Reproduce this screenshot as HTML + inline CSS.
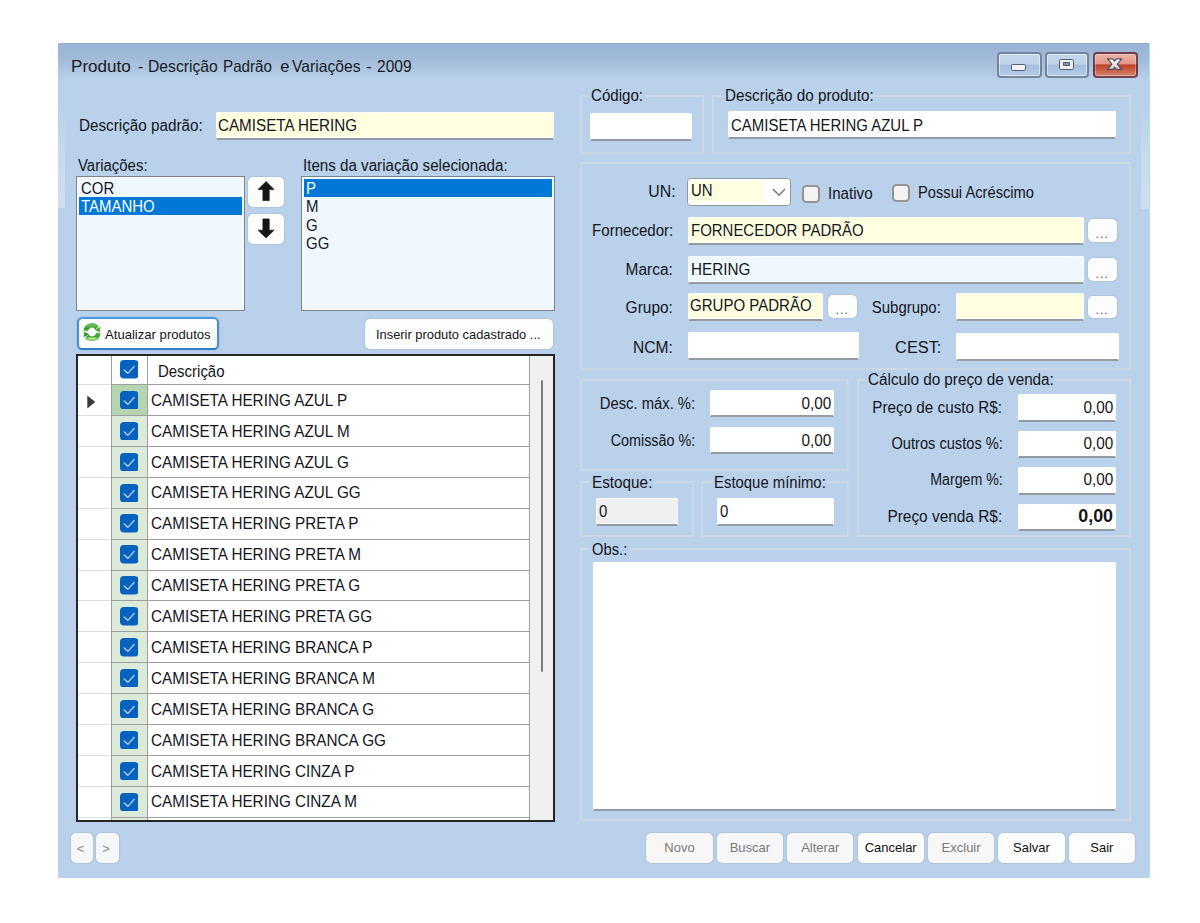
<!DOCTYPE html>
<html lang="pt-BR">
<head>
<meta charset="utf-8">
<title>Produto - Descrição Padrão e Variações - 2009</title>
<style>
*{box-sizing:border-box;margin:0;padding:0}
html,body{width:1200px;height:923px;background:#fff;overflow:hidden}
body{font-family:"Liberation Sans",sans-serif;font-size:16px;color:#15151c;position:relative}
#win{position:absolute;left:58px;top:43px;width:1092px;height:835px;background:#b9d1ea}
#cap{position:absolute;left:0;top:0;width:100%;height:40px;background:linear-gradient(#93afd0 0,#9ab5d5 2px,#a0bad8 15px,#a7c1de 22px,#afc9e4 29px,#b9d1ea 37px)}
.abs,.t,.tr,.in,.gb,.btn,.lb,.cb{position:absolute}
/* text: condensed to mimic MS Sans Serif */
.t{white-space:pre;line-height:20px;height:20px;transform:scaleX(.935);transform-origin:0 50%}
.tr{white-space:pre;line-height:20px;height:20px;transform:scaleX(.935);transform-origin:100% 50%;text-align:right}
.in{background:#fff;border:1px solid rgba(255,255,255,.8);border-bottom:2px solid #949aa1;box-shadow:inset 0 -1px 0 rgba(255,255,255,.85);border-radius:1.5px}
.y{background:#ffffe1}
.b{background:#f0f8ff}
.g{background:#f0f0f0}
.gb{border:2px solid #ccd7e3}
.gl{position:absolute;background:#b9d1ea;height:2px;top:-2px}
.btn{background:#fdfdfd;border-radius:5px;box-shadow:0 0 1.5px rgba(110,115,125,.55)}
.lb{background:#f0f8ff;border:1px solid #7e8288;box-shadow:inset 0 0 0 1px #fbfdff}
.sel{position:absolute;background:#0078d7}
.cb{width:18px;height:18px;background:#f3f3f3;border:2px solid #949494;border-radius:4.5px}

.bb{font-size:13px;line-height:30px;text-align:center}
.cbtn{border:2px solid rgba(98,112,138,.78);border-radius:4px;background:linear-gradient(#c5d7ed 0,#bed2ea 46%,#a5bedd 50%,#b4cce8 100%);box-shadow:inset 0 0 0 1px rgba(255,255,255,.5)}
.cbtn.x{border-color:rgba(92,52,72,.85);background:linear-gradient(#efb2a6 0,#e29886 44%,#bd4429 50%,#c9583f 70%,#d98672 100%);box-shadow:inset 0 0 0 1px rgba(255,255,255,.3)}
</style>
</head>
<body>
<div id="win">
<div id="cap"></div>
<div class="abs" style="left:0;top:64px;width:6.5px;height:101px;background:linear-gradient(rgba(255,255,255,0),rgba(255,255,255,.2) 45%,rgba(255,255,255,.3))"></div>
<div class="abs" style="right:1px;top:64px;width:8px;height:102px;background:linear-gradient(rgba(255,255,255,0),rgba(255,255,255,.2) 45%,rgba(255,255,255,.3))"></div>
<div class="abs" style="right:0;top:0;width:1.5px;height:100%;background:#a9e2f6"></div>
</div>
<div class="t" style="left:78.55px;top:115.85px;transform:scaleX(0.953);">Descrição padrão:</div>
<div class="in y" style="left:216px;top:112px;width:338px;height:28px;"></div>
<div class="t" style="left:218.05px;top:116.05px;transform:scaleX(0.95);">CAMISETA HERING</div>
<div class="t" style="left:78.30px;top:156.05px;">Variações:</div>
<div class="t" style="left:303.05px;top:156.05px;transform:scaleX(0.947);">Itens da variação selecionada:</div>
<div class="lb" style="left:76px;top:176px;width:169px;height:135px;"></div>
<div class="sel" style="left:78.5px;top:197px;width:163.25px;height:18px;"></div>
<div class="t" style="left:80.60px;top:179.05px;">COR</div>
<div class="t" style="left:80.60px;top:197.35px;color:#fff;">TAMANHO</div>
<div class="btn" style="left:248px;top:177px;width:36.39999999999998px;height:30.30000000000001px;"><svg width="36" height="30" viewBox="0 0 36 30"><path d="M18.1 4.6 L26 12.4 H21.2 V23.6 H14.9 V12.4 H10.1 Z" fill="#161616" stroke="#161616" stroke-width=".7" stroke-linejoin="round"/></svg></div>
<div class="btn" style="left:248px;top:213.5px;width:36.39999999999998px;height:30.69999999999999px;"><svg width="36" height="30" viewBox="0 0 36 30"><path d="M18.1 23.9 L26 16.2 H21.2 V4.9 H14.9 V16.2 H10.1 Z" fill="#161616" stroke="#161616" stroke-width=".7" stroke-linejoin="round"/></svg></div>
<div class="lb" style="left:301px;top:176px;width:254px;height:135px;"></div>
<div class="sel" style="left:303.75px;top:178.75px;width:248.25px;height:18.25px;"></div>
<div class="t" style="left:306.30px;top:179.05px;color:#fff;">P</div>
<div class="t" style="left:306.30px;top:197.35px;">M</div>
<div class="t" style="left:305.90px;top:215.55px;">G</div>
<div class="t" style="left:305.90px;top:233.75px;">GG</div>
<div class="btn" style="left:77.2px;top:317.4px;width:141.60000000000002px;height:33.0px;border:2px solid #3f8fdc;border-color:#4b99de #3f8fdc #2f80cc #3f8fdc;background:#fdfdfd;border-radius:5.5px;"></div>
<svg class="abs" style="left:82px;top:322.4px" width="20" height="21" viewBox="0 0 20 21"><defs><linearGradient id="rg" x1="0" y1="0" x2="0" y2="1"><stop offset="0" stop-color="#63bb55"/><stop offset=".5" stop-color="#3fa233"/><stop offset=".55" stop-color="#2c9622"/><stop offset="1" stop-color="#7fd05e"/></linearGradient></defs><ellipse cx="10" cy="17.2" rx="7.6" ry="1.6" fill="#555" opacity=".35"/><path d="M3.7 9.2 A6.3 6.3 0 0 1 15 5.8" fill="none" stroke="url(#rg)" stroke-width="4.5"/><path d="M12.6 7.8 L18.4 4.8 L17.7 10.2 Z" fill="#4aa83e"/><path d="M16.3 10.8 A6.3 6.3 0 0 1 5 14.2" fill="none" stroke="url(#rg)" stroke-width="4.5"/><path d="M7.4 12.2 L1.6 15.2 L2.3 9.8 Z" fill="#2f9a25"/><path d="M6.5 15.6 A6.6 6.6 0 0 0 13.5 15.6" fill="none" stroke="#c4ee8e" stroke-width="1.3" opacity=".9"/></svg>
<div class="t" style="left:105.30px;top:324.80px;font-size:13px;transform:scaleX(1.008);">Atualizar produtos</div>
<div class="btn" style="left:365px;top:318.7px;width:187.5px;height:30.0px;"></div>
<div class="t" style="left:375.80px;top:324.80px;font-size:13px;transform:scaleX(.99);">Inserir produto cadastrado ...</div>
<div id="grid" class="abs" style="left:76px;top:354px;width:479px;height:468px;background:#fff;overflow:hidden"><div class="abs" style="left:453.7px;top:0;width:25.3px;height:100%;background:#f0f0f0"></div><div class="abs" style="left:464.8px;top:25.8px;width:2.6px;height:292.6px;background:#7c7c7c;border-radius:1px"></div><div class="abs" style="left:36px;top:30.60px;width:35px;height:30.9px;background:#b4d5b0"></div><div class="abs" style="left:36px;top:61.50px;width:35px;height:30.9px;background:#dcebd9"></div><div class="abs" style="left:36px;top:92.40px;width:35px;height:30.9px;background:#dcebd9"></div><div class="abs" style="left:36px;top:123.30px;width:35px;height:30.9px;background:#dcebd9"></div><div class="abs" style="left:36px;top:154.20px;width:35px;height:30.9px;background:#dcebd9"></div><div class="abs" style="left:36px;top:185.10px;width:35px;height:30.9px;background:#dcebd9"></div><div class="abs" style="left:36px;top:216.00px;width:35px;height:30.9px;background:#dcebd9"></div><div class="abs" style="left:36px;top:246.90px;width:35px;height:30.9px;background:#dcebd9"></div><div class="abs" style="left:36px;top:277.80px;width:35px;height:30.9px;background:#dcebd9"></div><div class="abs" style="left:36px;top:308.70px;width:35px;height:30.9px;background:#dcebd9"></div><div class="abs" style="left:36px;top:339.60px;width:35px;height:30.9px;background:#dcebd9"></div><div class="abs" style="left:36px;top:370.50px;width:35px;height:30.9px;background:#dcebd9"></div><div class="abs" style="left:36px;top:401.40px;width:35px;height:30.9px;background:#dcebd9"></div><div class="abs" style="left:36px;top:432.30px;width:35px;height:30.9px;background:#dcebd9"></div><div class="abs" style="left:36px;top:463.20px;width:35px;height:30.9px;background:#dcebd9"></div><div class="abs" style="left:35px;top:0;width:1px;height:100%;background:#9e9e9e"></div><div class="abs" style="left:71px;top:0;width:1px;height:100%;background:#9e9e9e"></div><div class="abs" style="left:453px;top:0;width:1px;height:100%;background:#9e9e9e"></div><div class="abs" style="left:0;top:30px;width:36px;height:1px;background:#dedede"></div><div class="abs" style="left:35px;top:30px;width:419px;height:1px;background:#9e9e9e"></div><div class="abs" style="left:0;top:61px;width:36px;height:1px;background:#dedede"></div><div class="abs" style="left:35px;top:61px;width:419px;height:1px;background:#9e9e9e"></div><div class="abs" style="left:0;top:92px;width:36px;height:1px;background:#dedede"></div><div class="abs" style="left:35px;top:92px;width:419px;height:1px;background:#9e9e9e"></div><div class="abs" style="left:0;top:123px;width:36px;height:1px;background:#dedede"></div><div class="abs" style="left:35px;top:123px;width:419px;height:1px;background:#9e9e9e"></div><div class="abs" style="left:0;top:154px;width:36px;height:1px;background:#dedede"></div><div class="abs" style="left:35px;top:154px;width:419px;height:1px;background:#9e9e9e"></div><div class="abs" style="left:0;top:185px;width:36px;height:1px;background:#dedede"></div><div class="abs" style="left:35px;top:185px;width:419px;height:1px;background:#9e9e9e"></div><div class="abs" style="left:0;top:216px;width:36px;height:1px;background:#dedede"></div><div class="abs" style="left:35px;top:216px;width:419px;height:1px;background:#9e9e9e"></div><div class="abs" style="left:0;top:246px;width:36px;height:1px;background:#dedede"></div><div class="abs" style="left:35px;top:246px;width:419px;height:1px;background:#9e9e9e"></div><div class="abs" style="left:0;top:277px;width:36px;height:1px;background:#dedede"></div><div class="abs" style="left:35px;top:277px;width:419px;height:1px;background:#9e9e9e"></div><div class="abs" style="left:0;top:308px;width:36px;height:1px;background:#dedede"></div><div class="abs" style="left:35px;top:308px;width:419px;height:1px;background:#9e9e9e"></div><div class="abs" style="left:0;top:339px;width:36px;height:1px;background:#dedede"></div><div class="abs" style="left:35px;top:339px;width:419px;height:1px;background:#9e9e9e"></div><div class="abs" style="left:0;top:370px;width:36px;height:1px;background:#dedede"></div><div class="abs" style="left:35px;top:370px;width:419px;height:1px;background:#9e9e9e"></div><div class="abs" style="left:0;top:401px;width:36px;height:1px;background:#dedede"></div><div class="abs" style="left:35px;top:401px;width:419px;height:1px;background:#9e9e9e"></div><div class="abs" style="left:0;top:432px;width:36px;height:1px;background:#dedede"></div><div class="abs" style="left:35px;top:432px;width:419px;height:1px;background:#9e9e9e"></div><div class="abs" style="left:0;top:463px;width:36px;height:1px;background:#dedede"></div><div class="abs" style="left:35px;top:463px;width:419px;height:1px;background:#9e9e9e"></div><div class="abs" style="left:0;top:494px;width:36px;height:1px;background:#dedede"></div><div class="abs" style="left:35px;top:494px;width:419px;height:1px;background:#9e9e9e"></div><svg class="abs" style="left:43.5px;top:6.2px" width="18.5" height="18.5" viewBox="0 0 18 18"><rect width="18" height="18" rx="3.8" fill="#0561be"/><path d="M4.1 9.8 L7.7 13 L13.7 6.4" fill="none" stroke="#fff" stroke-opacity=".68" stroke-width="1.4" stroke-linecap="round" stroke-linejoin="round"/></svg><div class="t" style="left:81.5px;top:7.95px">Descrição</div><svg class="abs" style="left:43.5px;top:36.80px" width="18.5" height="18.5" viewBox="0 0 18 18"><rect width="18" height="18" rx="3.8" fill="#0561be"/><path d="M4.1 9.8 L7.7 13 L13.7 6.4" fill="none" stroke="#fff" stroke-opacity=".68" stroke-width="1.4" stroke-linecap="round" stroke-linejoin="round"/></svg><div class="t" style="left:75.2px;top:36.75px;transform:scaleX(.955)">CAMISETA HERING AZUL P</div><svg class="abs" style="left:43.5px;top:67.70px" width="18.5" height="18.5" viewBox="0 0 18 18"><rect width="18" height="18" rx="3.8" fill="#0561be"/><path d="M4.1 9.8 L7.7 13 L13.7 6.4" fill="none" stroke="#fff" stroke-opacity=".68" stroke-width="1.4" stroke-linecap="round" stroke-linejoin="round"/></svg><div class="t" style="left:75.2px;top:67.65px;transform:scaleX(.955)">CAMISETA HERING AZUL M</div><svg class="abs" style="left:43.5px;top:98.60px" width="18.5" height="18.5" viewBox="0 0 18 18"><rect width="18" height="18" rx="3.8" fill="#0561be"/><path d="M4.1 9.8 L7.7 13 L13.7 6.4" fill="none" stroke="#fff" stroke-opacity=".68" stroke-width="1.4" stroke-linecap="round" stroke-linejoin="round"/></svg><div class="t" style="left:75.2px;top:98.55px;transform:scaleX(.955)">CAMISETA HERING AZUL G</div><svg class="abs" style="left:43.5px;top:129.50px" width="18.5" height="18.5" viewBox="0 0 18 18"><rect width="18" height="18" rx="3.8" fill="#0561be"/><path d="M4.1 9.8 L7.7 13 L13.7 6.4" fill="none" stroke="#fff" stroke-opacity=".68" stroke-width="1.4" stroke-linecap="round" stroke-linejoin="round"/></svg><div class="t" style="left:75.2px;top:129.45px;transform:scaleX(.955)">CAMISETA HERING AZUL GG</div><svg class="abs" style="left:43.5px;top:160.40px" width="18.5" height="18.5" viewBox="0 0 18 18"><rect width="18" height="18" rx="3.8" fill="#0561be"/><path d="M4.1 9.8 L7.7 13 L13.7 6.4" fill="none" stroke="#fff" stroke-opacity=".68" stroke-width="1.4" stroke-linecap="round" stroke-linejoin="round"/></svg><div class="t" style="left:75.2px;top:160.35px;transform:scaleX(.955)">CAMISETA HERING PRETA P</div><svg class="abs" style="left:43.5px;top:191.30px" width="18.5" height="18.5" viewBox="0 0 18 18"><rect width="18" height="18" rx="3.8" fill="#0561be"/><path d="M4.1 9.8 L7.7 13 L13.7 6.4" fill="none" stroke="#fff" stroke-opacity=".68" stroke-width="1.4" stroke-linecap="round" stroke-linejoin="round"/></svg><div class="t" style="left:75.2px;top:191.25px;transform:scaleX(.955)">CAMISETA HERING PRETA M</div><svg class="abs" style="left:43.5px;top:222.20px" width="18.5" height="18.5" viewBox="0 0 18 18"><rect width="18" height="18" rx="3.8" fill="#0561be"/><path d="M4.1 9.8 L7.7 13 L13.7 6.4" fill="none" stroke="#fff" stroke-opacity=".68" stroke-width="1.4" stroke-linecap="round" stroke-linejoin="round"/></svg><div class="t" style="left:75.2px;top:222.15px;transform:scaleX(.955)">CAMISETA HERING PRETA G</div><svg class="abs" style="left:43.5px;top:253.10px" width="18.5" height="18.5" viewBox="0 0 18 18"><rect width="18" height="18" rx="3.8" fill="#0561be"/><path d="M4.1 9.8 L7.7 13 L13.7 6.4" fill="none" stroke="#fff" stroke-opacity=".68" stroke-width="1.4" stroke-linecap="round" stroke-linejoin="round"/></svg><div class="t" style="left:75.2px;top:253.05px;transform:scaleX(.955)">CAMISETA HERING PRETA GG</div><svg class="abs" style="left:43.5px;top:284.00px" width="18.5" height="18.5" viewBox="0 0 18 18"><rect width="18" height="18" rx="3.8" fill="#0561be"/><path d="M4.1 9.8 L7.7 13 L13.7 6.4" fill="none" stroke="#fff" stroke-opacity=".68" stroke-width="1.4" stroke-linecap="round" stroke-linejoin="round"/></svg><div class="t" style="left:75.2px;top:283.95px;transform:scaleX(.955)">CAMISETA HERING BRANCA P</div><svg class="abs" style="left:43.5px;top:314.90px" width="18.5" height="18.5" viewBox="0 0 18 18"><rect width="18" height="18" rx="3.8" fill="#0561be"/><path d="M4.1 9.8 L7.7 13 L13.7 6.4" fill="none" stroke="#fff" stroke-opacity=".68" stroke-width="1.4" stroke-linecap="round" stroke-linejoin="round"/></svg><div class="t" style="left:75.2px;top:314.85px;transform:scaleX(.955)">CAMISETA HERING BRANCA M</div><svg class="abs" style="left:43.5px;top:345.80px" width="18.5" height="18.5" viewBox="0 0 18 18"><rect width="18" height="18" rx="3.8" fill="#0561be"/><path d="M4.1 9.8 L7.7 13 L13.7 6.4" fill="none" stroke="#fff" stroke-opacity=".68" stroke-width="1.4" stroke-linecap="round" stroke-linejoin="round"/></svg><div class="t" style="left:75.2px;top:345.75px;transform:scaleX(.955)">CAMISETA HERING BRANCA G</div><svg class="abs" style="left:43.5px;top:376.70px" width="18.5" height="18.5" viewBox="0 0 18 18"><rect width="18" height="18" rx="3.8" fill="#0561be"/><path d="M4.1 9.8 L7.7 13 L13.7 6.4" fill="none" stroke="#fff" stroke-opacity=".68" stroke-width="1.4" stroke-linecap="round" stroke-linejoin="round"/></svg><div class="t" style="left:75.2px;top:376.65px;transform:scaleX(.955)">CAMISETA HERING BRANCA GG</div><svg class="abs" style="left:43.5px;top:407.60px" width="18.5" height="18.5" viewBox="0 0 18 18"><rect width="18" height="18" rx="3.8" fill="#0561be"/><path d="M4.1 9.8 L7.7 13 L13.7 6.4" fill="none" stroke="#fff" stroke-opacity=".68" stroke-width="1.4" stroke-linecap="round" stroke-linejoin="round"/></svg><div class="t" style="left:75.2px;top:407.55px;transform:scaleX(.955)">CAMISETA HERING CINZA P</div><svg class="abs" style="left:43.5px;top:438.50px" width="18.5" height="18.5" viewBox="0 0 18 18"><rect width="18" height="18" rx="3.8" fill="#0561be"/><path d="M4.1 9.8 L7.7 13 L13.7 6.4" fill="none" stroke="#fff" stroke-opacity=".68" stroke-width="1.4" stroke-linecap="round" stroke-linejoin="round"/></svg><div class="t" style="left:75.2px;top:438.45px;transform:scaleX(.955)">CAMISETA HERING CINZA M</div><svg class="abs" style="left:43.5px;top:469.40px" width="18.5" height="18.5" viewBox="0 0 18 18"><rect width="18" height="18" rx="3.8" fill="#0561be"/><path d="M4.1 9.8 L7.7 13 L13.7 6.4" fill="none" stroke="#fff" stroke-opacity=".68" stroke-width="1.4" stroke-linecap="round" stroke-linejoin="round"/></svg><div class="t" style="left:75.2px;top:469.35px;transform:scaleX(.955)">CAMISETA HERING CINZA G</div><svg class="abs" style="left:10.8px;top:41.2px" width="9" height="14" viewBox="0 0 9 14"><path d="M0.3 0.4 L8.2 7 L0.3 13.6 Z" fill="#3a3a3a"/></svg><div class="abs" style="left:0;top:0;width:100%;height:100%;border:2px solid #262626"></div></div>
<div class="btn" style="left:71px;top:832.5px;width:22.299999999999997px;height:30.799999999999955px;background:#f6f7f8;"></div>
<div class="btn" style="left:96.3px;top:832.5px;width:22.5px;height:30.799999999999955px;background:#f6f7f8;"></div>
<div class="t" style="left:76.80px;top:839.00px;font-size:13px;color:#8a8a8a;transform:none;">&lt;</div>
<div class="t" style="left:102.30px;top:839.00px;font-size:13px;color:#8a8a8a;transform:none;">&gt;</div>
<div class="gb" style="left:580px;top:95px;width:124px;height:59px;"><div class="gl" style="left:7px;width:56px"></div></div>
<div class="t" style="left:591.30px;top:86.05px;transform:scaleX(0.944);">Código:</div>
<div class="in" style="left:590px;top:113px;width:102px;height:28px;"></div>
<div class="gb" style="left:712px;top:95px;width:419px;height:59px;"><div class="gl" style="left:9px;width:143px"></div></div>
<div class="t" style="left:724.80px;top:86.05px;transform:scaleX(0.95);">Descrição do produto:</div>
<div class="in" style="left:728px;top:111px;width:388px;height:28px;"></div>
<div class="t" style="left:730.55px;top:115.80px;">CAMISETA HERING AZUL P</div>
<div class="gb" style="left:580px;top:162px;width:551px;height:208px;"></div>
<div class="tr" style="right:524.30px;top:181.80px;transform:scaleX(0.99);">UN:</div>
<div class="abs" style="left:687px;top:177.6px;width:103.60000000000002px;height:28.80000000000001px;background:#fff;border:1.3px solid #989898;border-radius:3.5px;"><div class="abs" style="left:2px;top:2.2px;width:73.5px;height:21px;background:#ffffe1"></div><svg class="abs" style="left:83.5px;top:9.5px" width="14" height="9" viewBox="0 0 14 9"><path d="M1 1 L7 7.2 L13 1" fill="none" stroke="#777" stroke-width="1.4"/></svg></div>
<div class="t" style="left:691.05px;top:181.30px;">UN</div>
<div class="cb" style="left:802px;top:184.5px;width:18px;height:18.0px;"></div>
<div class="t" style="left:828.20px;top:184.45px;transform:scaleX(0.946);">Inativo</div>
<div class="cb" style="left:892.2px;top:184.2px;width:17.59999999999991px;height:18.0px;"></div>
<div class="t" style="left:918.05px;top:183.05px;transform:scaleX(0.919);">Possui Acréscimo</div>
<div class="tr" style="right:526.80px;top:221.30px;transform:scaleX(0.941);">Fornecedor:</div>
<div class="in y" style="left:688px;top:217px;width:396px;height:28px;"></div>
<div class="t" style="left:691.05px;top:220.55px;">FORNECEDOR PADRÃO</div>
<div class="btn" style="left:1088.25px;top:219.25px;width:28.75px;height:22.75px;"></div>
<div class="tr" style="right:526.80px;top:260.05px;transform:scaleX(0.967);">Marca:</div>
<div class="in b" style="left:688px;top:256px;width:396px;height:28px;"></div>
<div class="t" style="left:691.05px;top:259.55px;transform:scaleX(0.952);">HERING</div>
<div class="btn" style="left:1088.25px;top:258.25px;width:28.75px;height:23.0px;"></div>
<div class="tr" style="right:526.80px;top:297.55px;transform:scaleX(0.967);">Grupo:</div>
<div class="in y" style="left:688px;top:293px;width:135px;height:28px;"></div>
<div class="t" style="left:689.80px;top:295.80px;transform:scaleX(0.939);">GRUPO PADRÃO</div>
<div class="btn" style="left:828px;top:295px;width:29px;height:22.5px;"></div>
<div class="tr" style="right:258.80px;top:298.30px;">Subgrupo:</div>
<div class="in y" style="left:956px;top:293px;width:128px;height:28px;"></div>
<div class="btn" style="left:1088.25px;top:295.5px;width:28.75px;height:22.0px;"></div>
<div class="tr" style="right:526.80px;top:337.55px;transform:scaleX(0.974);">NCM:</div>
<div class="in" style="left:688px;top:332px;width:171px;height:28px;"></div>
<div class="tr" style="right:258.80px;top:337.55px;transform:scaleX(1.02);">CEST:</div>
<div class="in" style="left:956px;top:333px;width:163px;height:28px;"></div>
<div class="t" style="left:1095.60px;top:224.37px;font-size:12.5px;color:#5c5470;transform:none;letter-spacing:.9px;">...</div>
<div class="t" style="left:1095.60px;top:263.87px;font-size:12.5px;color:#5c5470;transform:none;letter-spacing:.9px;">...</div>
<div class="t" style="left:835.60px;top:300.17px;font-size:12.5px;color:#5c5470;transform:none;letter-spacing:.9px;">...</div>
<div class="t" style="left:1095.60px;top:300.17px;font-size:12.5px;color:#5c5470;transform:none;letter-spacing:.9px;">...</div>
<div class="gb" style="left:580px;top:379px;width:269px;height:92px;"></div>
<div class="tr" style="right:505.05px;top:394.30px;transform:scaleX(0.925);">Desc. máx. %:</div>
<div class="in" style="left:710px;top:390px;width:124px;height:27px;"></div>
<div class="tr" style="right:369.30px;top:394.30px;transform:scaleX(.955);">0,00</div>
<div class="tr" style="right:505.05px;top:430.55px;transform:scaleX(0.897);">Comissão %:</div>
<div class="in" style="left:710px;top:427px;width:124px;height:27px;"></div>
<div class="tr" style="right:369.30px;top:430.55px;transform:scaleX(.955);">0,00</div>
<div class="gb" style="left:580px;top:481px;width:114px;height:56px;"><div class="gl" style="left:8px;width:64px"></div></div>
<div class="t" style="left:592.30px;top:472.55px;transform:scaleX(0.956);">Estoque:</div>
<div class="in g" style="left:596px;top:498px;width:82px;height:28px;"></div>
<div class="t" style="left:599.30px;top:502.05px;">0</div>
<div class="gb" style="left:701px;top:481px;width:148px;height:56px;"><div class="gl" style="left:9px;width:115px"></div></div>
<div class="t" style="left:713.55px;top:472.55px;transform:scaleX(0.931);">Estoque mínimo:</div>
<div class="in" style="left:717px;top:498px;width:117px;height:28px;"></div>
<div class="t" style="left:720.05px;top:502.05px;">0</div>
<div class="gb" style="left:857px;top:379px;width:274px;height:158px;"><div class="gl" style="left:7px;width:189px"></div></div>
<div class="t" style="left:868.05px;top:370.05px;transform:scaleX(0.954);">Cálculo do preço de venda:</div>
<div class="tr" style="right:197.55px;top:397.55px;transform:scaleX(0.954);">Preço de custo R$:</div>
<div class="in" style="left:1018px;top:394px;width:98px;height:28px;"></div>
<div class="tr" style="right:87.30px;top:397.55px;transform:scaleX(.955);">0,00</div>
<div class="tr" style="right:197.55px;top:434.00px;transform:scaleX(0.914);">Outros custos %:</div>
<div class="in" style="left:1018px;top:431px;width:98px;height:27px;"></div>
<div class="tr" style="right:87.30px;top:434.00px;transform:scaleX(.955);">0,00</div>
<div class="tr" style="right:197.55px;top:470.45px;transform:scaleX(0.888);">Margem %:</div>
<div class="in" style="left:1018px;top:467px;width:98px;height:28px;"></div>
<div class="tr" style="right:87.30px;top:470.45px;transform:scaleX(.955);">0,00</div>
<div class="tr" style="right:197.55px;top:506.90px;transform:scaleX(0.963);">Preço venda R$:</div>
<div class="in" style="left:1018px;top:504px;width:98px;height:27px;"></div>
<div class="tr" style="right:86.70px;top:506.24px;font-size:18.5px;font-weight:bold;transform:scaleX(.965);">0,00</div>
<div class="gb" style="left:580px;top:548px;width:551px;height:273px;"><div class="gl" style="left:8px;width:40px"></div></div>
<div class="t" style="left:591.80px;top:540.05px;transform:scaleX(0.922);">Obs.:</div>
<div class="in" style="left:593px;top:562px;width:523px;height:249px;"></div>
<div class="btn bb" style="left:646.4px;top:832.5px;width:66.2px;height:30.8px;color:#777;background:#f7f7f7;">Novo</div>
<div class="btn bb" style="left:716.8px;top:832.5px;width:66.2px;height:30.8px;color:#777;background:#f7f7f7;">Buscar</div>
<div class="btn bb" style="left:787.2px;top:832.5px;width:66.2px;height:30.8px;color:#777;background:#f7f7f7;">Alterar</div>
<div class="btn bb" style="left:857.6px;top:832.5px;width:66.2px;height:30.8px;color:#111;">Cancelar</div>
<div class="btn bb" style="left:928.0px;top:832.5px;width:66.2px;height:30.8px;color:#777;background:#f7f7f7;">Excluir</div>
<div class="btn bb" style="left:998.4px;top:832.5px;width:66.2px;height:30.8px;color:#111;">Salvar</div>
<div class="btn bb" style="left:1068.8px;top:832.5px;width:66.2px;height:30.8px;color:#111;">Sair</div>
<div id="title"><span class="t" style="left:71.30px;top:56.48px;font-size:16.5px;transform:scaleX(1.035);color:#1a1a22">Produto</span> <span class="t" style="left:137.70px;top:56.48px;font-size:16.5px;transform:scaleX(1);color:#1a1a22">-</span> <span class="t" style="left:147.90px;top:56.48px;font-size:16.5px;transform:scaleX(0.951);color:#1a1a22">Descrição</span> <span class="t" style="left:223.00px;top:56.48px;font-size:16.5px;transform:scaleX(0.921);color:#1a1a22">Padrão</span> <span class="t" style="left:280.20px;top:56.48px;font-size:16.5px;transform:scaleX(1);color:#1a1a22">e</span> <span class="t" style="left:292.20px;top:56.48px;font-size:16.5px;transform:scaleX(0.95);color:#1a1a22">Variações</span> <span class="t" style="left:366.10px;top:56.48px;font-size:16.5px;transform:scaleX(1);color:#1a1a22">-</span> <span class="t" style="left:376.50px;top:56.48px;font-size:16.5px;transform:scaleX(0.94);color:#1a1a22">2009</span></div>
<div class="abs cbtn" style="left:997.2px;top:52px;width:44.8px;height:25.8px"><div class="abs" style="left:11.8px;top:10px;width:15.5px;height:6.8px;background:#f1f1f1;border:1.3px solid #556072;border-radius:1.8px"></div></div>
<div class="abs cbtn" style="left:1045.3px;top:52px;width:43.7px;height:25.8px"><div class="abs" style="left:12px;top:4.6px;width:14.8px;height:11.6px;background:#f1f1f1;border:1.3px solid #556072;border-radius:1.8px"><div class="abs" style="left:2.6px;top:2.2px;width:7px;height:4.6px;background:#7d97bd;border:1px solid #556072"></div></div></div>
<div class="abs cbtn x" style="left:1092.8px;top:52px;width:45px;height:25.8px"><svg class="abs" style="left:9.6px;top:1.8px" width="22" height="16" viewBox="0 0 22 16"><defs><linearGradient id="xg" x1="0" y1="0" x2="0" y2="1"><stop offset="0" stop-color="#fff"/><stop offset="1" stop-color="#cfcfcf"/></linearGradient></defs><path d="M3.5 2.8 H8.7 L10.6 5 L12.5 2.8 H17.7 L13.3 8.15 L17.7 13.5 H12.5 L10.6 11.3 L8.7 13.5 H3.5 L7.9 8.15 Z" fill="url(#xg)" stroke="#5a5260" stroke-width="1.3" stroke-linejoin="round"/></svg></div>
</body>
</html>
